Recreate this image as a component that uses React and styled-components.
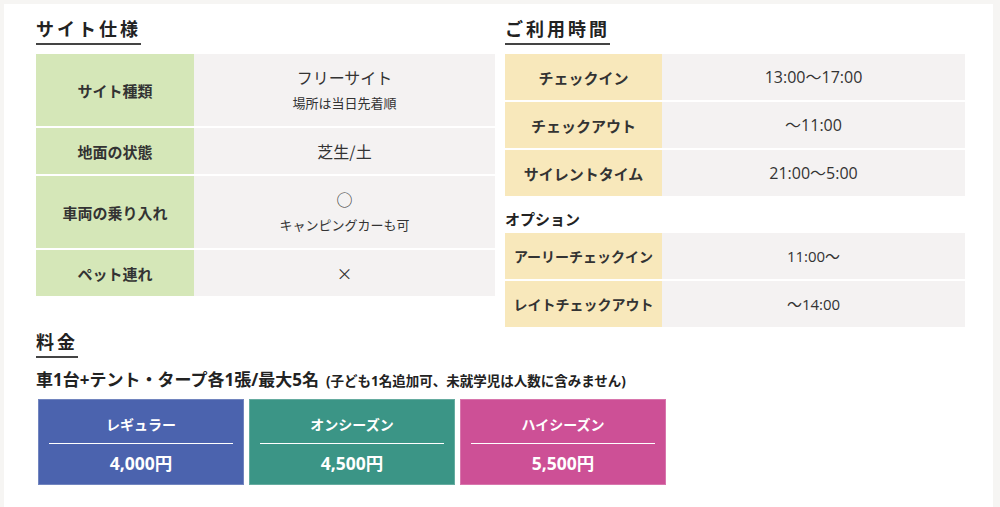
import styled, { createGlobalStyle } from 'styled-components';

const GlobalStyle = createGlobalStyle`
  html, body {
    margin: 0;
    background: #f6f5f3;
  }
  body {
    font-family: "Open Sans", "Noto Sans CJK JP", sans-serif;
    color: #333;
  }
`;

const Panel = styled.div`
  margin: 4px 7px 0 4px;
  min-height: 503px;
  box-sizing: border-box;
  background: #fff;
  padding: 12px 28px 20px 32px;
`;

const Columns = styled.div`
  display: grid;
  grid-template-columns: 459px 460px;
  column-gap: 10px;
  align-items: start;
`;

const Heading = styled.h2`
  display: inline-block;
  margin: ${(p) => p.$margin || '0 0 9px'};
  padding: 0 0 3px;
  font-family: "Noto Sans CJK JP", sans-serif;
  font-size: 18px;
  line-height: 24px;
  font-weight: 700;
  letter-spacing: 3px;
  color: #222;
  border-bottom: 2px solid #444;
`;

const SubHeading = styled.h3`
  margin: 12px 0 3px;
  font-family: "Noto Sans CJK JP", sans-serif;
  font-size: 15px;
  line-height: 22px;
  font-weight: 700;
  color: #222;
`;

const Table = styled.div`
  display: grid;
  grid-template-columns: ${(p) => p.$label}px 1fr;
  row-gap: 2px;
`;

const Label = styled.div`
  display: flex;
  align-items: center;
  justify-content: center;
  background: ${(p) => p.$tone};
  font-size: ${(p) => p.$size || 15}px;
  font-weight: 700;
  color: #333;
`;

const Value = styled.div`
  display: flex;
  flex-direction: column;
  align-items: center;
  justify-content: center;
  padding: 10px;
  background: #f4f2f2;
  font-size: ${(p) => p.$size || 16}px;
  line-height: 26px;
  color: #333;
`;

const Mark = styled.span`
  font-family: "Noto Sans CJK JP", sans-serif;
`;

const Note = styled.span`
  font-size: 13px;
  line-height: 26px;
`;

const PriceLead = styled.p`
  margin: 10px 0 6px;
  font-size: 17px;
  line-height: 24px;
  font-weight: 700;
  color: #222;

  small {
    margin-left: 7px;
    font-size: 13.5px;
  }
`;

const Cards = styled.div`
  display: grid;
  grid-template-columns: repeat(3, 206px);
  column-gap: 5px;
  padding-left: 2px;
`;

const Card = styled.div`
  box-sizing: border-box;
  height: 86px;
  padding: 13px 10px 0;
  background: ${(p) => p.$bg};
  border: 1px solid rgba(255, 255, 255, 0.22);
  color: #fff;
  text-align: center;
  font-weight: 700;
`;

const CardTitle = styled.div`
  font-size: 14px;
  line-height: 24px;
  padding-bottom: 6px;
  border-bottom: 1px solid #fff;
`;

const CardPrice = styled.div`
  margin-top: 6px;
  font-size: 17.5px;
  line-height: 26px;
`;

const GREEN = '#d5e7b8';
const YELLOW = '#f8e8bb';

const spec = [
  ['サイト種類', 'フリーサイト', '場所は当日先着順'],
  ['地面の状態', '芝生/土'],
  ['車両の乗り入れ', '○', 'キャンピングカーも可'],
  ['ペット連れ', '×'],
];

const hours = [
  ['チェックイン', '13:00～17:00'],
  ['チェックアウト', '～11:00'],
  ['サイレントタイム', '21:00～5:00'],
];

const options = [
  ['アーリーチェックイン', '11:00～'],
  ['レイトチェックアウト', '～14:00'],
];

const prices = [
  ['レギュラー', '4,000円', '#4b63ae'],
  ['オンシーズン', '4,500円', '#3b9586'],
  ['ハイシーズン', '5,500円', '#cd5096'],
];

export default function App() {
  return (
    <>
      <GlobalStyle />
      <Panel>
        <Columns>
          <section>
            <Heading>サイト仕様</Heading>
            <Table $label={158}>
              {spec.map(([label, value, note]) => (
                <>
                  <Label key={label} $tone={GREEN}>{label}</Label>
                  <Value key={label + 'v'}>
                    <Mark>{value}</Mark>
                    {note && <Note>{note}</Note>}
                  </Value>
                </>
              ))}
            </Table>
          </section>
          <section>
            <Heading>ご利用時間</Heading>
            <Table $label={157}>
              {hours.map(([label, value]) => (
                <>
                  <Label key={label} $tone={YELLOW}>{label}</Label>
                  <Value key={label + 'v'}>{value}</Value>
                </>
              ))}
            </Table>
            <SubHeading>オプション</SubHeading>
            <Table $label={157}>
              {options.map(([label, value]) => (
                <>
                  <Label key={label} $tone={YELLOW} $size={14}>{label}</Label>
                  <Value key={label + 'v'} $size={15}>{value}</Value>
                </>
              ))}
            </Table>
          </section>
        </Columns>

        <Heading $margin="2px 0 0">料金</Heading>
        <PriceLead>
          車1台+テント・タープ各1張/最大5名
          <small>(子ども1名追加可、未就学児は人数に含みません)</small>
        </PriceLead>
        <Cards>
          {prices.map(([title, price, bg]) => (
            <Card key={title} $bg={bg}>
              <CardTitle>{title}</CardTitle>
              <CardPrice>{price}</CardPrice>
            </Card>
          ))}
        </Cards>
      </Panel>
    </>
  );
}
